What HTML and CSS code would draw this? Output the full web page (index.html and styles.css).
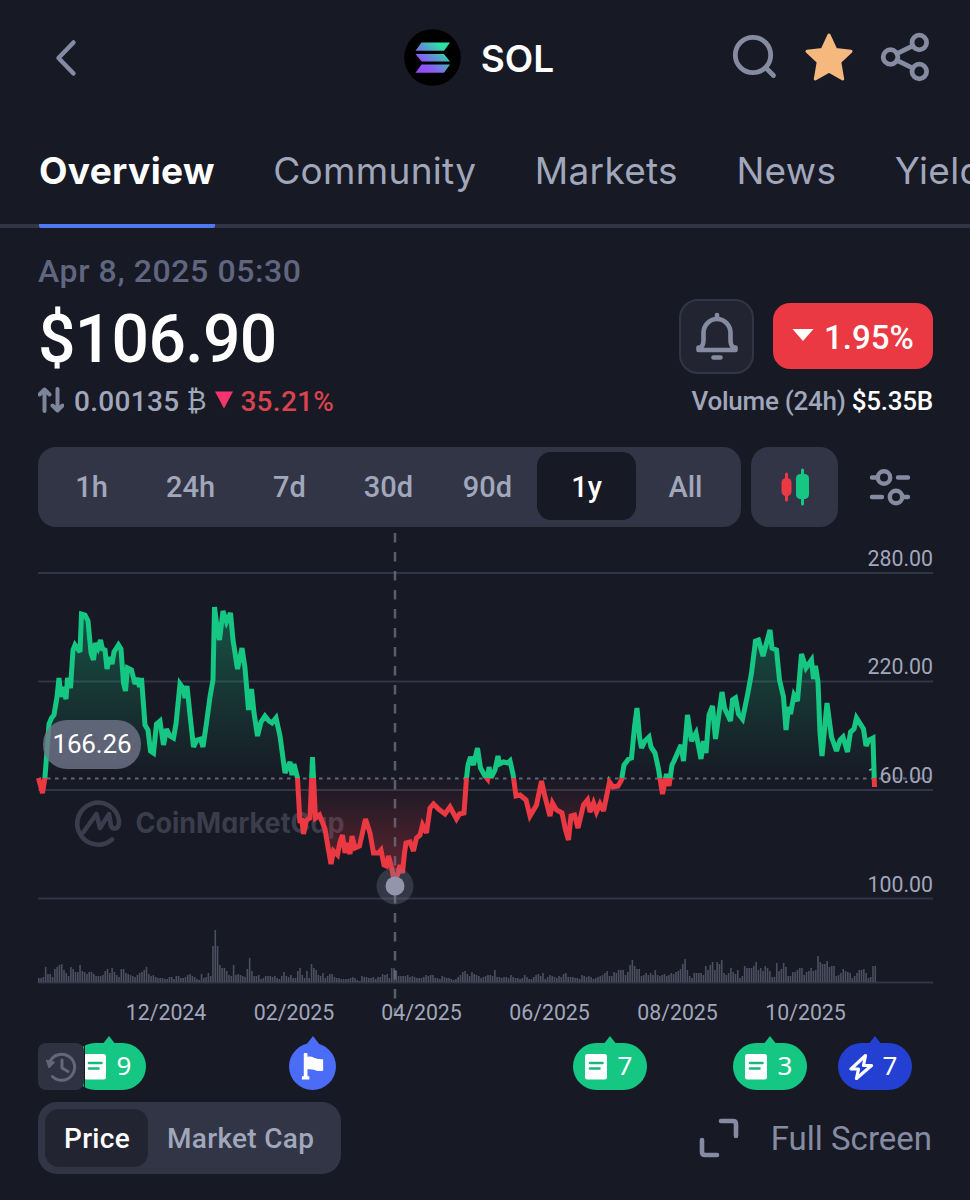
FILE: index.html
```html
<!DOCTYPE html>
<html lang="en">
<head>
    <meta charset="UTF-8">
    <meta name="viewport" content="width=device-width, initial-scale=1.0">
    <title>SOL Overview</title>
    <link rel="stylesheet" href="styles.css">
</head>
<body>
    <header>
        <svg class="back" viewBox="0 0 24 38"><path d="M19.500 3.500 L4.500 19 L19.500 34.500"/></svg>
        <div class="coin">
            <svg viewBox="0 0 57 57">
                <defs>
                    <linearGradient id="sol" gradientUnits="userSpaceOnUse" x1="14" y1="44" x2="42" y2="13">
                        <stop offset="0" stop-color="#9945ff"/>
                        <stop offset="0.3" stop-color="#8a5cf2"/>
                        <stop offset="0.6" stop-color="#4fa5c8"/>
                        <stop offset="0.85" stop-color="#2fe0a5"/>
                    </linearGradient>
                </defs>
                <circle cx="28.500" cy="28.500" r="28.300" fill="#000"/>
                <path fill="url(#sol)" d="M17.500 13.500H46L40 21.700H11.500zM11.500 25H40L46 32.500H17.500zM17.500 35.500H46L40 43.700H11.500z"/>
            </svg>
            <h1>SOL</h1>
        </div>
        <div class="actions">
            <svg class="search" viewBox="0 0 46 46"><circle cx="21" cy="21" r="17.700"/><path d="M34 34L41.500 41.500"/></svg>
            <svg class="star" viewBox="0 0 50 50"><path d="M25 3L31.700 17.500L47 19.300L35.800 30L38.700 47L25 39.200L11.300 47L14.200 30L3 19.300L18.300 17.500z"/></svg>
            <svg class="share" viewBox="0 0 50 50"><circle cx="10.500" cy="25" r="7.300"/><circle cx="39.300" cy="10.500" r="7.300"/><circle cx="39.300" cy="39.500" r="7.300"/><path d="M17 21.700L32.700 13.800M17 28.300L32.700 36.200"/></svg>
        </div>
    </header>

    <nav>
        <a class="active">Overview</a>
        <a>Community</a>
        <a>Markets</a>
        <a>News</a>
        <a>Yield</a>
    </nav>

    <section class="summary">
        <p class="date">Apr 8, 2025 05:30</p>
        <div class="row price-row">
            <span class="price">$106.90</span>
            <div class="row">
                <button class="bell">
                    <svg viewBox="0 0 46 50"><path d="M23 4V8M6.500 36.500Q9.500 34.500 9.500 29V22A13.500 14 0 0 1 36.500 22V29Q36.500 34.500 39.500 36.500H41.500V39H4.500V36.500zM19.500 46.500H26.500"/></svg>
                </button>
                <span class="change"><svg viewBox="0 0 24 14"><path d="M1.500 1H22.500L12 13z"/></svg>1.95%</span>
            </div>
        </div>
        <div class="row sub-row">
            <div class="row btc">
                <svg class="swap" viewBox="0 0 26 26"><path d="M6.500 24V3M1.500 7.500L6.500 2.500L11.500 7.500M19.500 2V23M14.500 18.500L19.500 23.500L24.500 18.500"/></svg>
                <span>0.00135</span>
                <span class="sign">₿</span>
                <svg class="down" viewBox="0 0 18 18"><path d="M0 0.500H18L9 17.500z"/></svg>
                <span class="loss">35.21%</span>
            </div>
            <span class="volume">Volume (24h) <b>$5.35B</b></span>
        </div>
    </section>

    <div class="row controls">
        <div class="range">
            <span>1h</span>
            <span>24h</span>
            <span>7d</span>
            <span>30d</span>
            <span>90d</span>
            <span class="active">1y</span>
            <span>All</span>
        </div>
        <button class="candles">
            <svg viewBox="0 0 30 38">
                <path d="M6.500 6V32" stroke="#ea3943" stroke-width="3"/><rect x="1.500" y="10" width="10" height="18" rx="4.500" fill="#ea3943"/>
                <path d="M22.500 2V36" stroke="#16c784" stroke-width="3"/><rect x="16" y="6" width="13" height="25" rx="4.500" fill="#16c784"/>
            </svg>
        </button>
        <svg class="settings" viewBox="0 0 42 38"><path d="M3 9.500H8M29 9.500H39M3 29H13M34 29H39"/><circle cx="15" cy="9.500" r="6.200"/><circle cx="27" cy="29" r="6.200"/></svg>
    </div>

    <svg class="chart" viewBox="0 527 970 508">
        <defs>
            <linearGradient id="gain" gradientUnits="userSpaceOnUse" x1="0" y1="606" x2="0" y2="778">
                <stop offset="0" stop-color="#16c784" stop-opacity="0.34"/>
                <stop offset="1" stop-color="#16c784" stop-opacity="0"/>
            </linearGradient>
            <linearGradient id="loss" gradientUnits="userSpaceOnUse" x1="0" y1="778" x2="0" y2="880">
                <stop offset="0" stop-color="#ea3943" stop-opacity="0"/>
                <stop offset="1" stop-color="#ea3943" stop-opacity="0.36"/>
            </linearGradient>
            <clipPath id="above"><rect x="0" y="527" width="970" height="251"/></clipPath>
            <clipPath id="below"><rect x="0" y="778" width="970" height="200"/></clipPath>
        </defs>
        <g class="watermark">
            <path d="M112 839.500A21 21 0 1 1 119 820.500V823Q118.500 829 114 828.500Q110.500 828 110.500 823L109 814L100 828L96.500 814L83.500 832"/>
            <text x="135.500" y="833" textLength="209" lengthAdjust="spacingAndGlyphs">CoinMarketCap</text>
        </g>
        <path class="grid" d="M38 573H933M38 681.500H933M38 790H933M38 898.500H933M38 982.500H933"/>
        <path class="base" d="M47 778.500H933"/>
        <g class="y-axis">
            <text x="933" y="565.500">280.00</text>
            <text x="933" y="674">220.00</text>
            <text x="933" y="783">160.00</text>
            <text x="933" y="891.500">100.00</text>
        </g>
        <path id="gainArea" fill="url(#gain)" clip-path="url(#above)"/>
        <path id="lossArea" fill="url(#loss)" clip-path="url(#below)"/>
        <path id="bars"/>
        <path id="gainLine" class="line" stroke="#16c784" clip-path="url(#above)"/>
        <path id="lossLine" class="line" stroke="#ea3943" clip-path="url(#below)"/>
        <path class="cursor" d="M395 533V1014"/>
        <circle cx="395" cy="886" r="18.500" fill="#808599" fill-opacity="0.28"/>
        <circle cx="395" cy="886" r="9.500" fill="#9196ad"/>
        <rect x="43" y="720" width="98" height="49" rx="24" fill="#70748a" fill-opacity="0.8"/>
        <text class="tip" x="92" y="752.500" textLength="79">166.26</text>
        <g class="x-axis">
            <text x="166" y="1020">12/2024</text>
            <text x="294" y="1020">02/2025</text>
            <text x="421.500" y="1020">04/2025</text>
            <text x="549.500" y="1020">06/2025</text>
            <text x="677.500" y="1020">08/2025</text>
            <text x="805.500" y="1020">10/2025</text>
        </g>
    </svg>

    <div class="events">
        <div class="history"><svg viewBox="0 0 32 32"><path d="M5 10.500A13 13 0 1 1 7.500 25.500M17 9V17L23 20.500"/><path class="head" d="M1.500 9.500L4 17L9.500 11.500z"/></svg></div>
        <div class="pin news" style="left:109px"><svg viewBox="0 0 24 28"><rect x="1" y="1" width="22" height="25.500" rx="2.500"/><path d="M6 10H18.500M6 15.500H15.500"/></svg>9</div>
        <div class="pin flag" style="left:312.500px"><svg viewBox="0 0 26 30"><path d="M5 1.500V26" stroke="#fff" stroke-width="4" stroke-linecap="round"/><path d="M6 4Q11 3 14 5Q18 7 24 6.500V19Q18 20 14 18Q11 17 6 17.500zM1 25H9V28.500H1z" fill="#fff"/></svg></div>
        <div class="pin news" style="left:610px"><svg viewBox="0 0 24 28"><rect x="1" y="1" width="22" height="25.500" rx="2.500"/><path d="M6 10H18.500M6 15.500H15.500"/></svg>7</div>
        <div class="pin news" style="left:770px"><svg viewBox="0 0 24 28"><rect x="1" y="1" width="22" height="25.500" rx="2.500"/><path d="M6 10H18.500M6 15.500H15.500"/></svg>3</div>
        <div class="pin bolt" style="left:875px"><svg viewBox="0 0 24 28"><path d="M16.500 2.500L2 16H9.500L7.500 25.500L22.500 12.500H14.500z"/></svg>7</div>
    </div>

    <footer class="row">
        <div class="toggle">
            <span class="active">Price</span>
            <span>Market Cap</span>
        </div>
        <div class="row full">
            <svg viewBox="0 0 40 40"><path d="M22 3H34Q37 3 37 6V18M3 22V34Q3 37 6 37H18"/></svg>
            <span>Full Screen</span>
        </div>
    </footer>

    <script>
        // x,y pairs of the one year price line
        const prices = `38.5,778 42.5,793 45,777 49,724 51.5,718 54,715 57,697 59,678 61,697 62.5,687 66,699 67.500,678 70.500,688
            73,650 75,645 80,652 81.500,614 85,615 88,621 91,653 93.500,660 95.500,643 98,648 100.500,640 102.500,649 105,650
            107,669 109.500,657 112,664 114,652 118.500,645 121,649 123.500,683 125.500,691 127.500,668 131.500,670 135,684
            137.500,678 139.500,687 141.500,678 145,725 148,730 150.500,751 153.500,753 156.500,724 160,721 163.500,745
            166.500,729 170,736 173.500,738 176,724 180,684 183.500,689 185,698 187,686 190,715 193.500,747 197,740 200.500,739
            203,747 206.500,723 210,697 213,680 214.500,607 217,627 219.500,640 223,611 226.500,622 230.500,613 233,640
            237.500,669 242,648 245,668 248.500,710 251.500,689 254,713 257.500,736 261,722 265,716 269,721 272,723 276,718
            280,736 285,773 290,762 292,775 294,764 297.500,778 300,823 301.500,818 303.500,834 306.500,820 310,818 312.500,757
            315.500,818 319.500,815 325,829 328,847 331,864 333.500,851 337.500,855 340,842 342.500,835 345,853 347,843 350,854
            352,836 355,848 359.500,846 365.500,819 370,833 373.500,853 378.500,853 381,850 384,865 386.500,866 388.500,856
            391.500,867 394,880 397.500,875 400,865 402.500,873 404.500,853 406,843 410,842 413.500,851 416.500,838 420,835
            422.500,825 426.500,833 430,808 433.500,804 438.500,809 445,814 450,807 456.500,819 459.500,814 464,813 466.500,778
            468,765 470.500,757 473.500,765 477.500,748 480.500,768 485,776 487.500,779 489,767 491,778 495,770 498,756
            499.500,764 503.500,762 508,763 510,761 513,774 516,796 520,795 526,800 530,816 536.500,805 541.500,781 545,797
            550,816 552.500,803 556.500,810 562,813 565.500,830 568.500,840 571,816 574.500,815 578,828 583.500,805 587.500,800
            590,812 593.500,803 596.500,812 600,804 603.500,811 609.500,782 613,787 618,786 621.500,780 624,765 628.500,759
            631.500,758 634.500,727 637,708 639.500,737 641.500,748 645,741 649,737 651,747 655,753 658.500,769 662.500,794
            666.500,774 669,786 672,765 674,761 681,745 683.500,761 687.500,715 691.500,741 696,733 701,759 703.500,741
            706,753 709,715 712.500,706 715.500,739 722,692 724.500,708 730.500,721 732.500,700 735.500,698 738.500,714
            742.500,719 747.500,695 751.500,673 755.500,641 758.500,640 763,656 770,630 772,648 776.500,650 779.500,680
            783.500,697 786,730 788.500,707 790.500,714 794,695 797.500,701 801.500,654 806,668 811.500,660 813.500,679
            815.500,666 818,682 820,733 822,756 827,703 831.500,737 836.500,751 840,740 843,737 847.500,752 850.500,732
            854,729 856.500,718 863.500,729 866,746 869,740 873,738 874.500,787`.split(/\s+/);

        const line = "M" + prices.join("L");
        const area = line + "L874.5,778L38.5,778Z";
        document.getElementById("gainLine").setAttribute("d", line);
        document.getElementById("lossLine").setAttribute("d", line);
        document.getElementById("gainArea").setAttribute("d", area);
        document.getElementById("lossArea").setAttribute("d", area);

        // daily volume
        const volume = [
            4,4,5,15,8,8,5,13,15,17,18,12,9,6,15,13,10,10,17,11,10,8,10,10,8,6,6,6,7,11,13,9,14,10,7,5,13,13,9,8,
            7,6,5,7,9,10,12,15,8,6,7,5,4,4,4,3,3,5,5,3,6,6,4,4,5,7,8,6,5,3,2,8,4,5,9,6,36,52,36,17,
            14,14,11,7,6,17,7,8,7,6,5,13,24,11,6,6,7,3,4,6,6,6,5,6,4,3,6,10,6,5,7,4,4,11,14,7,4,11,4,18,
            14,12,7,6,9,4,6,8,8,5,4,4,3,3,3,3,4,5,4,2,1,6,5,5,4,4,5,3,5,5,8,7,8,4,14,14,11,6,6,6,
            6,7,5,6,5,4,4,4,5,7,6,7,7,4,4,3,6,5,4,4,3,2,3,5,7,10,11,8,6,10,8,7,6,4,5,6,7,7,6,12,
            5,5,4,5,5,4,7,5,4,4,3,4,7,5,3,3,5,7,8,6,9,3,5,7,6,5,4,6,5,8,9,5,5,5,4,4,3,7,6,5,
            6,5,3,4,5,6,7,9,11,6,6,10,9,12,12,12,7,10,17,22,16,13,13,6,7,9,7,9,7,12,7,6,7,8,6,7,9,8,10,11,
            13,18,23,12,6,4,9,9,9,9,7,16,12,17,20,12,20,18,22,9,7,9,14,10,8,12,4,6,16,14,14,14,16,20,12,14,11,16,14,11,
            5,5,19,11,13,19,15,6,6,10,10,12,14,14,7,10,11,14,11,12,26,20,18,18,21,15,16,16,6,7,9,13,11,10,9,4,6,9,12,12,
            13,9,4,5,16,16];
        let bars = "";
        volume.forEach((v, i) => {
            bars += `M${(38.8 + i * 836.5 / (volume.length - 1)).toFixed(2)},982v-${v}`;
        });
        document.getElementById("bars").setAttribute("d", bars);
    </script>
</body>
</html>
```
FILE: styles.css
```css
* {
    box-sizing: border-box;
}
body {
    margin: 0;
    width: 970px;
    height: 1200px;
    overflow: hidden;
    background: #171924;
    color: #a1a7bb;
    font-family: Roboto, "Liberation Sans", sans-serif;
}
svg {
    display: block;
    fill: none;
    stroke-linecap: round;
    stroke-linejoin: round;
}
button {
    border: 0;
    padding: 0;
    display: flex;
    align-items: center;
    justify-content: center;
}
.row {
    display: flex;
    align-items: center;
    justify-content: space-between;
}

/* top bar */
header {
    display: grid;
    grid-template-columns: 1fr auto 1fr;
    align-items: center;
    height: 114px;
    padding: 0 40px 0 54px;
}
.back {
    width: 24px;
    height: 38px;
    margin-top: 1px;
    stroke: #858ca2;
    stroke-width: 4.500;
}
.coin {
    display: flex;
    align-items: center;
    gap: 20px;
    margin-right: 26px;
}
.coin svg {
    width: 57px;
    height: 57px;
}
.coin h1 {
    margin: 2px 0 0;
    color: #fff;
    font: 600 37px Inter, sans-serif;
}
.actions {
    display: flex;
    align-items: center;
    justify-content: flex-end;
    gap: 26px;
}
.actions svg {
    stroke: #858ca2;
    stroke-width: 4.800;
}
.search {
    width: 46px;
    height: 46px;
}
.actions .star {
    width: 50px;
    height: 50px;
    fill: #f5b97f;
    stroke: #f5b97f;
    stroke-width: 3;
}
.share {
    width: 50px;
    height: 50px;
}

/* tabs */
nav {
    display: flex;
    gap: 58.500px;
    height: 113.500px;
    padding-left: 39px;
    border-bottom: 4.500px solid #323546;
    white-space: nowrap;
}
nav a {
    padding-top: 34px;
    height: 113.500px;
    font: 400 37px/46px Inter, sans-serif;
    letter-spacing: 0.300px;
}
nav a.active {
    width: 176.500px;
    color: #fff;
    font-weight: 700;
    letter-spacing: 0.350px;
    border-bottom: 4.500px solid #4d78ef;
    border-radius: 2px;
}

/* price block */
.summary {
    padding: 20.500px 37px 0 38px;
    height: 219.500px;
}
.date {
    margin: 0;
    color: #616680;
    font-size: 32px;
    font-weight: 500;
    line-height: 46px;
    letter-spacing: 0.600px;
}
.price-row {
    height: 84px;
}
.price {
    margin-top: 7px;
    color: #fff;
    font-size: 66px;
    font-weight: 500;
    letter-spacing: -0.700px;
}
.bell {
    width: 75px;
    height: 75px;
    margin-right: 19px;
    border: 2px solid #323546;
    border-radius: 19px;
    background: #222531;
}
.bell svg {
    width: 46px;
    height: 50px;
    stroke: #858ca2;
    stroke-width: 4.600;
}
.change {
    display: flex;
    align-items: center;
    width: 160px;
    height: 66px;
    padding: 2px 0 0 18px;
    border-radius: 17px;
    background: #ea3943;
    color: #fff;
    font-size: 33px;
    font-weight: 500;
}
.change svg {
    width: 24px;
    height: 14px;
    margin: -5px 9px 0 0;
    fill: #fff;
}
.sub-row {
    height: 46px;
    font-size: 28px;
}
.btc {
    font-weight: 500;
    letter-spacing: 0.300px;
}
.swap {
    width: 26px;
    height: 26px;
    margin: -2px 10px 0 0;
    stroke: #7d859b;
    stroke-width: 4;
}
.sign {
    margin-left: 7px;
    font-size: 27px;
    font-weight: 400;
    letter-spacing: 0;
}
.down {
    width: 18px;
    height: 18px;
    margin: -2px 7px 0 9px;
    fill: #f6356f;
}
.loss {
    color: #d9434f;
}
.volume {
    font-size: 26px;
    font-weight: 500;
    letter-spacing: -0.260px;
}
.volume b {
    color: #fff;
    font-weight: 500;
}

/* range buttons */
.controls {
    justify-content: flex-start;
    height: 80px;
    padding-left: 38px;
}
.range {
    display: flex;
    width: 703px;
    height: 80px;
    padding: 5px 6px 7px 4px;
    border-radius: 18px;
    background: #323546;
}
.range span {
    flex: 1;
    border-radius: 14px;
    text-align: center;
    font-size: 29px;
    font-weight: 500;
    line-height: 70px;
}
.range .active {
    background: #171924;
    color: #fff;
}
.candles {
    width: 87px;
    height: 80px;
    margin: 0 31px 0 10px;
    border-radius: 18px;
    background: #323546;
}
.candles svg {
    width: 30px;
    height: 38px;
}
.settings {
    width: 42px;
    height: 38px;
    stroke: #858ca2;
    stroke-width: 4.400;
}

/* chart */
.chart {
    width: 970px;
    height: 508px;
    stroke-linecap: butt;
}
.chart text {
    fill: #a1a7bb;
    font-size: 21.300px;
}
.grid {
    stroke: #323546;
    stroke-width: 2;
}
.base {
    stroke: #646878;
    stroke-width: 2;
    stroke-dasharray: 3.500 4.500;
}
.y-axis {
    text-anchor: end;
}
.x-axis, .tip {
    text-anchor: middle;
}
.line {
    stroke-width: 5;
    stroke-linejoin: miter;
    stroke-miterlimit: 3;
}
.cursor {
    stroke: #6b6e7e;
    stroke-opacity: 0.8;
    stroke-width: 2.500;
    stroke-dasharray: 9.500 9.500;
}
#bars {
    stroke: #4c4f60;
    stroke-width: 1.600;
}
.chart .tip {
    fill: #fff;
    font-size: 26px;
}
.watermark path {
    stroke: #3b3d4d;
    stroke-width: 4.600;
    stroke-linecap: round;
}
.chart .watermark text {
    fill: #3b3d4d;
    font: 700 28px Inter, sans-serif;
    font-feature-settings: "cv11";
}

/* event pins on the timeline */
.events {
    position: relative;
    height: 67px;
}
.history {
    position: absolute;
    z-index: 2;
    left: 38px;
    top: 8px;
    width: 46px;
    height: 47px;
    padding: 8px 7px;
    border-radius: 8px;
    background: #2f3241;
}
.history::before {
    content: "";
    position: absolute;
    z-index: -1;
    inset: 0 -1px 0 34px;
    border-right: 1px solid #171924;
}
.history svg {
    width: 32px;
    height: 32px;
    stroke: #636779;
    stroke-width: 3;
}
.history .head {
    fill: #636779;
    stroke-width: 1;
}
.pin {
    position: absolute;
    top: 8px;
    width: 74px;
    height: 47px;
    margin-left: -37px;
    padding-right: 4px;
    display: flex;
    align-items: center;
    justify-content: center;
    gap: 10px;
    border-radius: 24px;
    color: #fff;
    font: 400 26px/43px "Noto Sans", sans-serif;
    padding-bottom: 2px;
}
.pin::before {
    content: "";
    position: absolute;
    top: -7px;
    left: 50%;
    margin-left: -7px;
    border: 7px solid transparent;
    border-top: 0;
    border-bottom: 9px solid #16c784;
}
.pin svg {
    width: 24px;
    height: 28px;
    margin-top: 2px;
}
.news {
    background: #16c784;
}
.news rect {
    fill: #fff;
}
.news path {
    stroke: #16b87c;
    stroke-width: 2.600;
}
.flag {
    width: 47px;
    margin-left: -23.500px;
    padding-right: 0;
    background: #4a6cf7;
}
.flag::before {
    border-bottom-color: #4a6cf7;
}
.bolt {
    background: #2440d2;
}
.bolt::before {
    border-bottom-color: #2440d2;
}
.bolt path {
    stroke: #fff;
    stroke-width: 3.200;
}

/* bottom bar */
footer {
    height: 72px;
    padding: 0 38px;
}
.toggle {
    display: flex;
    width: 303px;
    height: 72px;
    padding: 7px;
    border-radius: 19px;
    background: #323546;
    font-size: 28px;
    font-weight: 500;
    line-height: 60px;
    letter-spacing: 0.300px;
}
.toggle span {
    padding: 0 19px;
    white-space: nowrap;
}
.toggle .active {
    width: 103px;
    border-radius: 14px;
    background: #222531;
    color: #fff;
}
.full {
    color: #858ca2;
    font-size: 33px;
    gap: 32px;
}
.full svg {
    width: 40px;
    height: 40px;
    stroke: #858ca2;
    stroke-width: 4.600;
}
```
